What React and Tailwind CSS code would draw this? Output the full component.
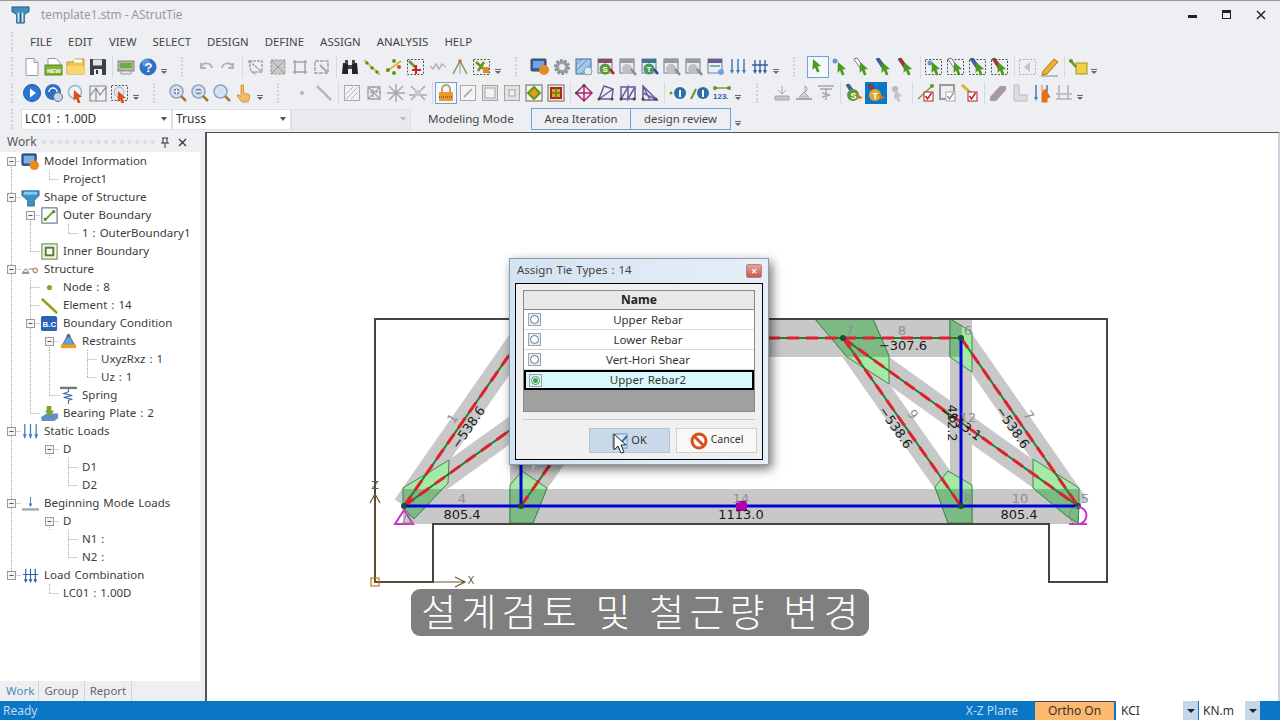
import React from 'react';

const Sv = ({ children, s = 20 }) => (
  <svg width={s} height={s} viewBox="0 0 20 20" className="block">{children}</svg>
);

// small bits shared by the toolbar icons
const Cur = ({ x = 8, y = 5, c = '#4c9a1c' }) => <path d={`M${x} ${y}l8 7-3.5.5 2 5-2.5 1-2-5-2.5 2.500z`} fill={c} />;
const Dash = ({ c = '#555' }) => <rect x="1.500" y="2.500" width="16" height="15" fill="none" stroke={c} strokeDasharray="2 1.500" />;
const Band = ({ c = '#7fb0e0', e = '#445' }) => <path d="M2 2l3-1 6 8-3 2z" fill={c} stroke={e} strokeWidth=".7" />;
const Win = ({ c = '#8a4a6a' }) => (
  <g>
    <rect x="2" y="2" width="14" height="14" fill="#e8eef6" stroke="#6a7a9a" />
    <rect x="2" y="2" width="14" height="4" fill={c} />
  </g>
);
const Glass = ({ c = '#7a8fb0' }) => (
  <g>
    <circle cx="8.500" cy="8.500" r="6.500" fill="#d7e2f2" stroke="#8fa3c4" strokeWidth="1.500" />
    <circle cx="8.500" cy="8.500" r="3" fill={c} />
    <path d="M13 13l5 5" stroke="#a87a3a" strokeWidth="2.500" />
  </g>
);
const GrayBox = ({ inner = 5 }) => (
  <g fill="none" stroke="#a5a5a5">
    <rect x="2.500" y="2.500" width="15" height="15" fill="#e2e2e2" />
    <rect x={inner} y={inner} width={20 - 2 * inner} height={20 - 2 * inner} fill="#f2f2f2" />
  </g>
);
const GrayNet = () => (
  <g stroke="#a3a3a3" fill="none" strokeWidth="1.300">
    <path d="M4 4h12v12H4zM4 4l12 12M16 4L4 16" />
    <path d="M3 9h14M9 3v14" strokeDasharray="2 1" />
  </g>
);
const Truss = ({ c = '#6a5a9a', d = 'M3 16L8 3 17 6 16 16zM3 16L17 6' }) => (
  <g>
    <path d={d} fill="none" stroke={c} strokeWidth="1.500" />
    <circle cx="3" cy="16" r="1.500" fill="#445" />
    <circle cx="16" cy="16" r="1.500" fill="#445" />
  </g>
);
const GraySupport = () => (
  <g fill="#c4c4c4" stroke="#a8a8a8">
    <path d="M10 3v7M6 7l4 4 4-4" fill="none" />
    <path d="M3 13h14v4H3z" />
  </g>
);

const I = {
  newdoc: <Sv><path d="M4 1.500h8l4 4v13H4z" fill="#fff" stroke="#9a9a9a" /><path d="M12 1.500v4h4" fill="#eee" stroke="#9a9a9a" /></Sv>,
  newg: <Sv><path d="M4 1.500h8l4 4v3H4z" fill="#fff" stroke="#9a9a9a" /><rect x="1" y="8" width="17" height="10" fill="#7bb52e" stroke="#5c8a20" /><text x="3" y="15.500" fontSize="6" fontWeight="700" fill="#fff" fontFamily="Liberation Sans, sans-serif">NEW</text></Sv>,
  open: <Sv><path d="M1 5h6l2-3h9v15H1z" fill="#f2c24c" stroke="#c8962a" /><path d="M1 9h17v8H1z" fill="#f8d66e" /><rect x="8" y="2.500" width="8" height="3" fill="#fff" /></Sv>,
  save: <Sv><path d="M2 2h15l1 1v15H2z" fill="#3c4048" /><rect x="5" y="2.500" width="9" height="6" fill="#dfe3e8" /><rect x="6" y="12" width="8" height="6" fill="#eee" /><rect x="8" y="13" width="2" height="4" fill="#333" /></Sv>,
  print: <Sv><rect x="2" y="4" width="16" height="10" fill="#b0b8a8" stroke="#7f8a78" /><rect x="4" y="6" width="12" height="5" fill="#6fae3c" /><rect x="5" y="14" width="10" height="3" fill="#e8e8e8" stroke="#999" /></Sv>,
  help: <Sv><circle cx="10" cy="10" r="8.500" fill="#2f6fc4" /><circle cx="8" cy="6" r="4" fill="#7fb0ea" opacity=".6" /><text x="6.500" y="15" fontSize="13" fontWeight="700" fill="#fff" fontFamily="Liberation Sans, sans-serif">?</text></Sv>,
  undo: <Sv><path d="M5 10c2-5 10-5 11 1M5 6v5h5" fill="none" stroke="#b3b3b3" strokeWidth="2" /></Sv>,
  redo: <Sv><path d="M15 10c-2-5-10-5-11 1M15 6v5h-5" fill="none" stroke="#b3b3b3" strokeWidth="2" /></Sv>,
  g1: <Sv><path d="M3 4h13v11H5zM3 4l13 11M7 15l3 3" fill="none" stroke="#a4a4a4" strokeWidth="1.500" strokeDasharray="3 1" /></Sv>,
  g2: <Sv><rect x="3" y="3" width="14" height="14" fill="#c8c8c8" stroke="#9a9a9a" strokeDasharray="3 1" /><path d="M3 3l14 14M17 3L3 17" stroke="#999" /></Sv>,
  g3: <Sv><path d="M3 5h14M5 3v14M15 3v14M3 15h14" fill="none" stroke="#a4a4a4" strokeWidth="1.500" /></Sv>,
  g4: <Sv><path d="M3 4h13v12H3z" fill="none" stroke="#a4a4a4" strokeWidth="1.500" strokeDasharray="4 1" /><path d="M8 8l7 7" stroke="#a4a4a4" strokeWidth="2" /></Sv>,
  binoc: <Sv><path d="M3 6h5v11H2zM12 6h5l1 11h-6z" fill="#222" /><rect x="8" y="8" width="4" height="4" fill="#444" /><rect x="5" y="3" width="3" height="4" fill="#444" /><rect x="12" y="3" width="3" height="4" fill="#444" /></Sv>,
  tie: <Sv><path d="M2 3l16 15" stroke="#d8c050" strokeWidth="2" /><path d="M4 5l2 2M9 10l2 2M14 14l2 2" stroke="#5c8a20" strokeWidth="3" /></Sv>,
  cross: <Sv><path d="M2 15L17 4" stroke="#d8b840" strokeWidth="2" /><circle cx="10" cy="4" r="2" fill="#5c9a20" /><circle cx="4" cy="13" r="2" fill="#5c9a20" /><circle cx="15" cy="10" r="2" fill="#c05020" /><circle cx="10" cy="16" r="2" fill="#5c9a20" /></Sv>,
  dashred: <Sv><Dash /><path d="M3 4l7 7" stroke="#5c9a20" strokeWidth="2.500" /><path d="M10 8v9M6 13h9" stroke="#d02020" strokeWidth="2" /></Sv>,
  graytie: <Sv><path d="M2 9l3 3 3-5 3 5 3-5 4 3" fill="none" stroke="#b4b4b4" strokeWidth="1.500" /></Sv>,
  tri: <Sv><path d="M3 17L10 4l7 13" fill="none" stroke="#7a9a50" strokeWidth="1.500" /><path d="M10 4v13" stroke="#999" /><circle cx="10" cy="4" r="1.700" fill="#c07020" /></Sv>,
  dashgreen: <Sv><Dash /><path d="M4 5l8 7M12 5l-6 9" stroke="#5c9a20" strokeWidth="2.500" /><rect x="11" y="10" width="6" height="6" fill="#d89020" /></Sv>,
  monitor: <Sv><rect x="1" y="2" width="15" height="12" rx="1" fill="#2f62a8" stroke="#444" /><rect x="3" y="4" width="11" height="7" fill="#6fa4de" /><circle cx="14" cy="13" r="5" fill="#e88a20" /></Sv>,
  gear: <Sv><circle cx="10" cy="10" r="6.500" fill="#9aa2ac" stroke="#8a929c" strokeWidth="3" strokeDasharray="2.500 1.500" /><circle cx="10" cy="10" r="3" fill="#eee" /></Sv>,
  hatch: <Sv><rect x="2" y="2" width="15" height="15" fill="#a8c8e8" stroke="#3a70a8" /><path d="M2 8l6-6M2 14L14 2M7 17L17 7" stroke="#5a90c8" /><circle cx="14" cy="14" r="4" fill="#dfeaf6" stroke="#7aa" /></Sv>,
  winS: <Sv><Win /><circle cx="9" cy="12" r="5.500" fill="#5c9a30" /><text x="6.500" y="15" fontSize="8" fontWeight="700" fill="#fff" fontFamily="Liberation Sans, sans-serif">S</text><path d="M14 12l4 5" stroke="#b02020" strokeWidth="2.500" /></Sv>,
  grayS: <Sv><Win c="#9a9a9a" /><circle cx="9" cy="12" r="5" fill="#c0c0c0" /><path d="M13 12l5 6" stroke="#8a8a8a" strokeWidth="2.500" /></Sv>,
  winT: <Sv><Win c="#3a7a8a" /><circle cx="9" cy="12" r="5.500" fill="#4a9a60" /><text x="6.500" y="15" fontSize="8" fontWeight="700" fill="#fff" fontFamily="Liberation Sans, sans-serif">T</text><path d="M14 12l4 5" stroke="#2050a0" strokeWidth="2.500" /></Sv>,
  winB: <Sv><Win c="#6a5a9a" /><rect x="4" y="8" width="10" height="2" fill="#8aa" /><circle cx="15" cy="15" r="3" fill="#6fa4de" /></Sv>,
  loads: <Sv><path d="M4 2v13M10 2v13M16 2v13" stroke="#3f7fc0" strokeWidth="1.500" /><path d="M2 13l2 4 2-4M8 13l2 4 2-4M14 13l2 4 2-4" fill="#3f7fc0" /></Sv>,
  combo: <Sv><path d="M2 8h16M5 3v12M10 3v12M15 3v12" stroke="#2f5fa8" strokeWidth="1.300" /><path d="M3 13l2 4 2-4M8 13l2 4 2-4M13 13l2 4 2-4" fill="#2f5fa8" /></Sv>,
  arrow: <Sv><Cur x={5} y={2} /></Sv>,
  a1: <Sv><circle cx="5" cy="4" r="2.500" fill="#6f95c8" /><Cur /></Sv>,
  a2: <Sv><Band c="#fff" /><Cur /></Sv>,
  a3: <Sv><Band c="#3860b8" /><Cur /></Sv>,
  a4: <Sv><Band c="#c02828" /><Cur /></Sv>,
  d1: <Sv><Dash /><circle cx="6" cy="6" r="2.500" fill="#6f95c8" /><Cur /></Sv>,
  d2: <Sv><Dash /><Band c="#fff" /><Cur /></Sv>,
  d3: <Sv><Dash /><Band c="#3860b8" /><Cur /></Sv>,
  d4: <Sv><Dash /><Band c="#c02828" /><Cur /></Sv>,
  dgray: <Sv><Dash c="#b0b0b0" /><path d="M12 5v10l-6-5z" fill="#c4c4c4" /></Sv>,
  pencil: <Sv><path d="M3 14L14 2l4 3L7 17l-5 1z" fill="#eeb030" stroke="#a87818" /><path d="M1 19h17" stroke="#888" /></Sv>,
  yellow: <Sv><rect x="8" y="6" width="11" height="11" fill="#f0d048" stroke="#a89020" /><path d="M2 3l6 7" stroke="#5c9a20" strokeWidth="2.500" /><circle cx="3" cy="4" r="2" fill="#5c9a20" /></Sv>,
  play: <Sv><circle cx="10" cy="10" r="8.500" fill="#2a78d0" stroke="#1a5aa8" /><path d="M8 5.500l6 4.500-6 4.500z" fill="#fff" /></Sv>,
  bluegear: <Sv><circle cx="9" cy="9" r="8" fill="#2f6fc4" /><path d="M5 9a4 4 0 018 0" stroke="#fff" fill="none" strokeWidth="1.500" /><circle cx="14" cy="14" r="4.500" fill="#c8d4e4" stroke="#678" /></Sv>,
  zcur: <Sv><circle cx="9" cy="9" r="6.500" fill="#f0f4fa" stroke="#9fb2cc" strokeWidth="1.500" /><Cur x={8} y={7} c="#d8501a" /></Sv>,
  poly: <Sv><path d="M2 3h16v15H2zM2 13l6-8 4 7 6-8M8 5v13" fill="none" stroke="#8a8a8a" strokeWidth="1.200" /></Sv>,
  dcur: <Sv><Dash /><circle cx="9" cy="9" r="5" fill="#dfe8f2" stroke="#9fb2cc" /><Cur x={8} y={8} c="#d8501a" /></Sv>,
  zplus: <Sv><Glass /><path d="M6 8.500h5M8.500 6v5" stroke="#fff" /></Sv>,
  zminus: <Sv><Glass /><path d="M6 8.500h5" stroke="#fff" strokeWidth="1.500" /></Sv>,
  zfit: <Sv><Glass c="#cfe0f2" /></Sv>,
  hand: <Sv><path d="M7 2h2.500v8l6 1.500V16l-2 3H8l-5-6 1-1.500 3 2z" fill="#f4bc6a" stroke="#d89838" /></Sv>,
  gdot: <Sv><circle cx="10" cy="10" r="2" fill="#b8b8b8" /></Sv>,
  gline: <Sv><path d="M3 3l14 14" stroke="#b8b8b8" strokeWidth="2.500" /></Sv>,
  ghatch: <Sv><rect x="2.500" y="2.500" width="15" height="15" fill="#f2f2f2" stroke="#a8a8a8" /><path d="M4 16L16 4M4 11l7-7M9 16l7-7" stroke="#b4b4b4" /></Sv>,
  ggrid: <Sv><GrayNet /></Sv>,
  gcross: <Sv><path d="M3 3l14 14M17 3L3 17M10 1v18M1 10h18" stroke="#a8a8a8" strokeWidth="1.500" /></Sv>,
  gcross2: <Sv><path d="M3 17L17 3M3 3l14 14M1 12h18" stroke="#a8a8a8" strokeWidth="1.500" /><rect x="7" y="7" width="6" height="6" fill="#c8c8c8" /></Sv>,
  lock: <Sv><path d="M6 9V6a4 4 0 018 0v3" fill="none" stroke="#c8a060" strokeWidth="2" /><rect x="3" y="9" width="14" height="9" rx="1" fill="#ee9a28" /><path d="M3 14h14" stroke="#8a6a30" strokeDasharray="1 1" strokeWidth="2" /></Sv>,
  glink: <Sv><rect x="2.500" y="2.500" width="15" height="15" fill="#f4f4f4" stroke="#aaa" /><path d="M6 14l8-8" stroke="#b0b0b0" strokeWidth="2" /></Sv>,
  gbox: <Sv><GrayBox inner={5} /></Sv>,
  gbox2: <Sv><GrayBox inner={7} /></Sv>,
  orange: <Sv><rect x="2" y="2" width="16" height="16" fill="#f8f4e4" stroke="#666" /><path d="M10 4l6 6-6 6-6-6z" fill="#e89a20" stroke="#5c9a20" strokeWidth="2" /></Sv>,
  redgreen: <Sv><rect x="2" y="2" width="16" height="16" fill="#f4f0e0" stroke="#666" /><path d="M5 5h10v10H5z" fill="#e8a028" stroke="#b02020" strokeWidth="2" /><path d="M10 5v10M5 10h10" stroke="#4a8a20" strokeWidth="1.500" /></Sv>,
  magenta: <Sv><path d="M10 2l8 8-8 8-8-8zM2 10h16M10 2v16" fill="none" stroke="#b02070" strokeWidth="1.500" /><circle cx="10" cy="2.500" r="1.500" fill="#445" /><circle cx="2.500" cy="10" r="1.500" fill="#445" /></Sv>,
  tr1: <Sv><Truss /></Sv>,
  tr2: <Sv><Truss d="M3 16L3 4H17V16zM3 16L10 4 10 16 17 4" /></Sv>,
  tr3: <Sv><Truss d="M3 3L3 17 17 17zM3 3L10 17M3 10L17 17" /></Sv>,
  i1: <Sv><circle cx="12" cy="10" r="6" fill="#2f6fa8" /><rect x="11" y="7" width="2" height="7" fill="#fff" /><circle cx="3" cy="10" r="1.500" fill="#5c9a20" /></Sv>,
  i2: <Sv><circle cx="13" cy="10" r="6" fill="#2f6fa8" /><rect x="12" y="7" width="2" height="7" fill="#fff" /><path d="M1 16L6 6" stroke="#5c9a20" strokeWidth="2" /></Sv>,
  num: <Sv><path d="M3 5h14" stroke="#7a9a50" strokeWidth="1.500" /><circle cx="3" cy="5" r="2" fill="#5c9a20" /><circle cx="17" cy="5" r="2" fill="#5c9a20" /><text x="1" y="16" fontSize="8" fontWeight="700" fill="#2f5fa8" fontFamily="Liberation Sans, sans-serif">123.</text></Sv>,
  gs1: <Sv><GraySupport /></Sv>,
  gs2: <Sv><path d="M10 3a3 3 0 010 6l5 5H5l5-5" fill="#d0d0d0" stroke="#a8a8a8" /><path d="M2 16h16" stroke="#a8a8a8" strokeWidth="2" /></Sv>,
  gs3: <Sv><path d="M2 3h16M4 6h12M10 6v11M6 10l8 2-8 2" fill="none" stroke="#a8a8a8" strokeWidth="1.500" /></Sv>,
  tS: <Sv><Band c="#3860b8" /><circle cx="9" cy="12" r="6" fill="#5c9a30" /><text x="6.500" y="15.500" fontSize="9" fontWeight="700" fill="#fff" fontFamily="Liberation Sans, sans-serif">S</text><path d="M12 10l7 5-4 1 1 3z" fill="#e8701a" /></Sv>,
  tT: <Sv><Band c="#c02828" /><circle cx="9" cy="12" r="6" fill="#e0a830" /><text x="6.500" y="15.500" fontSize="9" fontWeight="700" fill="#fff" fontFamily="Liberation Sans, sans-serif">T</text><path d="M12 10l7 5-4 1 1 3z" fill="#e8701a" /></Sv>,
  gcur: <Sv><circle cx="7" cy="6" r="3" fill="#b8b8b8" /><path d="M7 6l7 7-3 1 1 4-2 1-2-4-2 2z" fill="#c4c4c4" /></Sv>,
  chk1: <Sv><path d="M2 16L15 4" stroke="#7a9a50" strokeWidth="1.500" /><circle cx="16" cy="3" r="2" fill="#5c9a20" /><rect x="8" y="9" width="9" height="9" fill="#fff" stroke="#b02020" /><path d="M9.500 13l2 3 4-6" fill="none" stroke="#c02020" strokeWidth="1.500" /></Sv>,
  chk2: <Sv><rect x="2" y="2" width="14" height="14" fill="#eee" stroke="#999" strokeWidth="2" /><rect x="8" y="9" width="9" height="9" fill="#fff" stroke="#aaa" /><path d="M9.500 13l2 3 4-6" fill="none" stroke="#999" strokeWidth="1.500" /></Sv>,
  chk3: <Sv><path d="M2 2l10 9" stroke="#c8b838" strokeWidth="3" /><rect x="8" y="9" width="9" height="9" fill="#fff" stroke="#b02020" /><path d="M9.500 13l2 3 4-6" fill="none" stroke="#c02020" strokeWidth="1.500" /></Sv>,
  gbar: <Sv><path d="M2 14L12 3h6v4L8 18H2z" fill="#a89aa4" /><path d="M5 14l8-8" stroke="#c88" /></Sv>,
  gL: <Sv><path d="M4 2h5v10h8v6H4z" fill="#dcdcdc" stroke="#bbb" /></Sv>,
  drop: <Sv><path d="M4 2v14M15 2v7" stroke="#3f7fc0" strokeWidth="1.500" /><path d="M2 14l2 4 2-4" fill="#3f7fc0" /><path d="M10 2v7M13 6l5 8-3 1v4h-5v-9z" fill="#e8701a" stroke="#e8701a" /></Sv>,
  glds: <Sv><path d="M5 2v8M14 2v8M2 11h16M2 16h16M5 11v5M14 11v5" stroke="#b4b4b4" strokeWidth="1.500" /></Sv>,
};

const row1 = ['newdoc', 'newg', 'open', 'save', 's', 'print', 'help', 'd', 'g', 'undo', 'redo', 's', 'g1', 'g2', 'g3', 'g4', 's', 'binoc', 'tie', 'cross', 'dashred', 'graytie', 'tri', 'dashgreen', 'd', 'g', 'monitor', 'gear', 'hatch', 'winS', 'grayS', 'winT', 'grayS', 'grayS', 'winB', 'loads', 'combo', 'd', 'g', '#arrow', 'a1', 'a2', 'a3', 'a4', 's', 'd1', 'd2', 'd3', 'd4', 's', 'dgray', 'pencil', 's', 'yellow', 'd'];
const row2 = ['play', 'bluegear', 'zcur', 'poly', 'dcur', 'd', 'g', 'zplus', 'zminus', 'zfit', 'hand', 'd', 'g', 'gdot', 'gline', 's', 'ghatch', 'ggrid', 'gcross', 'gcross2', 's', '#lock', 'glink', 'gbox', 'gbox2', 'orange', 'redgreen', 's', 'magenta', 'tr1', 'tr2', 'tr3', 's', 'i1', 'i2', 'num', 'd', 'G', 'gs1', 'gs2', 'gs3', 's', 'tS', '@tT', 'gcur', 's', 'chk1', 'chk2', 'chk3', 's', 'gbar', 'gL', 'drop', 'glds', 'd'];

function Grip({ className }) {
  return <div className={`h-[20px] border-l-2 border-dotted border-[#cfd0d3] ${className}`} />;
}

function Tool({ t }) {
  if (t === 's') return <div className="w-[6px] h-[22px] flex justify-center"><div className="w-px h-full bg-[#d8d9dc]" /></div>;
  if (t === 'g') return <div className="w-[26px] flex justify-center"><Grip /></div>;
  if (t === 'G') return <div className="w-[28px] flex justify-center"><Grip /></div>;
  if (t === 'd') {
    return (
      <div className="w-[10px] flex flex-col items-center gap-[1px] pt-[8px]">
        <div className="w-[6px] h-px bg-[#666]" />
        <div className="w-0 h-0 border-x-[3px] border-x-transparent border-t-[3px] border-t-[#666]" />
      </div>
    );
  }
  if (t[0] === '#') {
    return <div className="w-[22px] h-[22px] flex items-center justify-center border border-[#6aa4d0] bg-[#f4f7fb]">{I[t.slice(1)]}</div>;
  }
  if (t[0] === '@') {
    return <div className="w-[22px] h-[22px] flex items-center justify-center bg-[#0a78c8]">{I[t.slice(1)]}</div>;
  }
  return <div className="w-[22px] h-[22px] flex items-center justify-center">{I[t]}</div>;
}

function Combo({ label, className, disabled }) {
  return (
    <div className={`h-[21px] flex items-center justify-between border border-[#e0e1e4] pl-[3px] pr-[4px] ${disabled ? 'bg-[#e9eaed]' : 'bg-white'} ${className}`}>
      <span className="text-[12px] text-[#333] [word-spacing:1px]">{label}</span>
      <div className={`w-0 h-0 border-x-[3px] border-x-transparent border-t-[4px] ${disabled ? 'border-t-[#bbb]' : 'border-t-[#555]'}`} />
    </div>
  );
}

// tree connector cells: F expander + line down, X expander through, Z expander + line up,
// | vertical, T tee, L corner, . empty
function Cell({ k }) {
  const dots = { stroke: '#a9a9a9', strokeDasharray: '1 1' };
  const box = k === 'F' || k === 'X' || k === 'Z';
  return (
    <svg width="19" height="18" className="block shrink-0">
      {(k === '|' || k === 'T' || k === 'X') && <line x1="9.500" y1="0" x2="9.500" y2="18" {...dots} />}
      {k === 'F' && <line x1="9.500" y1="9" x2="9.500" y2="18" {...dots} />}
      {(k === 'L' || k === 'Z') && <line x1="9.500" y1="0" x2="9.500" y2="9" {...dots} />}
      {(k === 'T' || k === 'L') && <line x1="9.500" y1="9.500" x2="19" y2="9.500" {...dots} />}
      {box && <line x1="9.500" y1="9.500" x2="19" y2="9.500" {...dots} />}
      {box && <rect x="5.500" y="5.500" width="8" height="8" fill="#f4f4f4" stroke="#9a9a9a" />}
      {box && <line x1="7.500" y1="9.500" x2="11.500" y2="9.500" stroke="#555" />}
    </svg>
  );
}

const T = {
  model: <Sv s={19}><rect x="1" y="2" width="15" height="12" rx="1" fill="#2f62a8" stroke="#334" /><rect x="3" y="4" width="11" height="8" fill="#7fb0e4" /><circle cx="14" cy="14" r="5" fill="#e88a20" /></Sv>,
  shape: <Sv s={19}><path d="M1 3h18v5l-5 5v6H7v-6L1 8z" fill="#3f8fc8" stroke="#2a6a9a" /><path d="M3 4h14v3H3z" fill="#8fc8ec" /></Sv>,
  outer: <Sv s={19}><rect x="2" y="2" width="16" height="16" fill="#fff" stroke="#3f5f6a" /><path d="M6 14l8-8" stroke="#6a9a2a" strokeWidth="2" /><rect x="4" y="12.500" width="3" height="3" fill="#5c8a20" /><rect x="13" y="4.500" width="3" height="3" fill="#5c8a20" /></Sv>,
  inner: <Sv s={19}><rect x="2" y="2" width="16" height="16" fill="#eef4e0" stroke="#5c7a30" /><rect x="6" y="6" width="8" height="8" fill="#fff" stroke="#5c7a30" strokeWidth="2" /></Sv>,
  struct: <Sv s={19}><path d="M2 13l3-4 3 4zM8 9.500h7" fill="none" stroke="#8a7a6a" /><circle cx="15" cy="11" r="2.500" fill="#f0e8e0" stroke="#a86a4a" /><path d="M1 14h8" stroke="#8a7a6a" /></Sv>,
  node: <Sv s={19}><circle cx="10" cy="10" r="2.700" fill="#8aa030" /></Sv>,
  element: <Sv s={19}><path d="M2 3l16 15" stroke="#b4b838" strokeWidth="3" /><path d="M2 3l16 15" stroke="#5c7a20" strokeWidth="1" /></Sv>,
  bc: <Sv s={19}><rect x="1" y="2" width="17" height="16" rx="2" fill="#2a62b8" /><text x="2.500" y="14" fontSize="8.500" fontWeight="700" fill="#fff" fontFamily="Liberation Sans, sans-serif">B.C</text></Sv>,
  restraints: <Sv s={19}><path d="M10 2l6 11H4z" fill="#6f9fd0" stroke="#3f6fa0" /><circle cx="10" cy="4" r="2" fill="#3f6fa0" /><rect x="2" y="13" width="16" height="4" fill="#e8a028" /></Sv>,
  spring: <Sv s={19}><path d="M1 2h18" stroke="#777" strokeWidth="2.500" /><path d="M10 3v3l-5 2 9 2-9 2 9 2-4 1v4" fill="none" stroke="#3f6fa8" strokeWidth="1.200" /></Sv>,
  plate: <Sv s={19}><path d="M1 14l6-4h12v5l-4 3H2z" fill="#5f8fc4" /><path d="M7 2h5v5h3l-5 6-5-6h2z" fill="#7aa82a" /></Sv>,
  loads: <Sv s={19}><path d="M4 2v12M10 2v12M16 2v12" stroke="#3f7fc0" strokeWidth="1.300" /><path d="M2 13l2 5 2-5M8 13l2 5 2-5M14 13l2 5 2-5" fill="#3f7fc0" /></Sv>,
  begin: <Sv s={19}><path d="M10 3v9" stroke="#3f7fc0" /><path d="M8 10l2 4 2-4" fill="#3f7fc0" /><rect x="1" y="15" width="18" height="2.500" fill="#a8a8a8" /></Sv>,
  combo: <Sv s={19}><path d="M2 9h16M5 3v12M10 3v12M15 3v12" stroke="#2f5fa8" strokeWidth="1.200" /><path d="M3 14l2 4 2-4M8 14l2 4 2-4M13 14l2 4 2-4" fill="#2f5fa8" /></Sv>,
};

const treeRows = [
  ['F', 'model', 'Model Information'],
  ['|.L', '', 'Project1'],
  ['X', 'shape', 'Shape of Structure'],
  ['|F', 'outer', 'Outer Boundary'],
  ['||.L', '', '1 : OuterBoundary1'],
  ['|L', 'inner', 'Inner Boundary'],
  ['X', 'struct', 'Structure'],
  ['|T', 'node', 'Node : 8'],
  ['|T', 'element', 'Element : 14'],
  ['|X', 'bc', 'Boundary Condition'],
  ['||F', 'restraints', 'Restraints'],
  ['|||.T', '', 'UxyzRxz : 1'],
  ['|||.L', '', 'Uz : 1'],
  ['||L', 'spring', 'Spring'],
  ['|L', 'plate', 'Bearing Plate : 2'],
  ['X', 'loads', 'Static Loads'],
  ['|.F', '', 'D'],
  ['|..T', '', 'D1'],
  ['|..L', '', 'D2'],
  ['X', 'begin', 'Beginning Mode Loads'],
  ['|.F', '', 'D'],
  ['|..T', '', 'N1 :'],
  ['|..L', '', 'N2 :'],
  ['Z', 'combo', 'Load Combination'],
  ['..L', '', 'LC01 : 1.00D'],
];

function TreeRow({ cells, icon, label }) {
  return (
    <div className="h-[18px] flex items-center">
      {cells.split('').map((k, i) => <Cell key={i} k={k} />)}
      {icon && <div className="w-[19px] shrink-0">{T[icon]}</div>}
      <span className="ml-1 -mt-px text-[11.5px] [word-spacing:1px] leading-[18px] text-[#3c3c3c] whitespace-nowrap">{label}</span>
    </div>
  );
}

const nodes = [
  '815,319 873,319 889,356 889,384 847,357',
  '950,319 972,332 972,372 950,357',
  '948,471 972,485 972,523 948,523 935,487',
  '1033,459 1079,488 1079,507 1078,523 1068,517 1033,488',
  '403,488 449,460 448,483 414,519 403,507',
  '510,485 522,471 547,488 533,523 510,523',
];

function Drawing() {
  const redGreen = [
    [404, 506, 521, 338], [404, 506, 639, 338], [521, 506, 639, 338],
    [521, 338, 961, 338], [843, 338, 961, 506], [843, 338, 1078, 506], [961, 338, 1078, 506],
  ];
  const lab = { fontFamily: '"DejaVu Sans", sans-serif', fontSize: 13, textAnchor: 'middle', fill: '#1a1a1a' };
  const gray = { fontFamily: '"DejaVu Sans", sans-serif', fontSize: 13, textAnchor: 'middle', fill: '#8f8f8f' };
  return (
    <svg width="1071" height="568" viewBox="207 133 1071 568" className="block">
      <defs>
        <clipPath id="chords">
          <rect x="403" y="489" width="676" height="35" />
          <rect x="510" y="319" width="452" height="38" />
        </clipPath>
      </defs>
      <g fill="#c8c8c8">
        <rect x="403" y="489" width="676" height="35" />
        <rect x="510" y="319" width="452" height="38" />
        <rect x="950" y="319" width="22" height="205" />
        <rect x="510" y="319" width="22" height="205" />
      </g>
      <g stroke="#c8c8c8" strokeWidth="23">
        <line x1="404" y1="506" x2="521" y2="338" />
        <line x1="404" y1="506" x2="639" y2="338" />
        <line x1="521" y1="506" x2="639" y2="338" />
        <line x1="843" y1="338" x2="961" y2="506" />
        <line x1="843" y1="338" x2="1078" y2="506" />
        <line x1="961" y1="338" x2="1078" y2="506" />
      </g>
      {nodes.map((p) => <polygon key={p} points={p} fill="#a6e8a6" stroke="#3f8a4f" />)}
      <g clipPath="url(#chords)">
        {nodes.map((p) => <polygon key={p} points={p} fill="#7cb983" stroke="#3f8a4f" />)}
      </g>
      <polygon points="375,319 1107,319 1107,582 1049,582 1049,524 433,524 433,582 375,582" fill="none" stroke="#444" strokeWidth="2" />
      {redGreen.map((l, i) => (
        <g key={i}>
          <line x1={l[0]} y1={l[1]} x2={l[2]} y2={l[3]} stroke="#1f7f30" strokeWidth="2" />
          <line x1={l[0]} y1={l[1]} x2={l[2]} y2={l[3]} stroke="#e0202a" strokeWidth="3" strokeDasharray="12 7" />
        </g>
      ))}
      <g stroke="#0000dc" strokeWidth="3">
        <line x1="404" y1="506" x2="1078" y2="506" />
        <line x1="521" y1="506" x2="521" y2="338" />
        <line x1="961" y1="506" x2="961" y2="338" />
      </g>
      <g fill="#14503a">
        <circle cx="404" cy="506" r="3" />
        <circle cx="521" cy="506" r="3" />
        <circle cx="961" cy="506" r="3" />
        <circle cx="1078" cy="506" r="3" />
        <circle cx="961" cy="338" r="3" />
        <circle cx="843" cy="338" r="3" />
      </g>
      <rect x="736" y="501" width="11" height="10" fill="#b000b0" />
      <path d="M404 510l-9 14h18z" fill="none" stroke="#d030d0" strokeWidth="2" />
      <path d="M407 512l-4 11h10z" fill="none" stroke="#888" />
      <path d="M1078 507a8.500 8.500 0 010 17M1069 524h18" fill="none" stroke="#d030d0" strokeWidth="2" />
      <path d="M1078 507a8.500 8.500 0 000 17" fill="none" stroke="#888" />

      <g fill="none" stroke="#6a5030" strokeWidth="1.200">
        <path d="M375 582V495M370 503l5-9 5 9" />
        <path d="M375 582H464M455 577l10 5-10 5" />
        <rect x="371" y="578" width="8" height="8" stroke="#b87a20" />
      </g>
      <text x="471" y="584" fontFamily='"DejaVu Sans", sans-serif' fontSize="10" textAnchor="middle" fill="#6a5a3a">X</text>
      <text x="375" y="489" fontFamily='"DejaVu Sans", sans-serif' fontSize="11" textAnchor="middle" fill="#6a5a3a">Z</text>

      <text x="462" y="503" {...gray}>4</text>
      <text x="741" y="503" {...gray}>14</text>
      <text x="1020" y="503" {...gray}>10</text>
      <text x="968" y="503" {...gray}>8</text>
      <text x="1085" y="503" {...gray}>5</text>
      <text x="968" y="335" {...gray}>6</text>
      <text x="850" y="335" {...gray}>7</text>
      <text x="902" y="335" {...gray}>8</text>
      <text x="968" y="422" {...gray}>12</text>
      <text transform="translate(909 417) rotate(55)" {...gray}>9</text>
      <text transform="translate(1025 418) rotate(55)" {...gray}>7</text>
      <text transform="translate(456 421) rotate(-55)" {...gray}>1</text>

      <text x="462" y="519" {...lab}>805.4</text>
      <text x="741" y="519" {...lab}>1113.0</text>
      <text x="1019" y="519" {...lab}>805.4</text>
      <text x="903" y="350" {...lab}>−307.6</text>
      <text transform="translate(472 430) rotate(-55)" {...lab}>−538.6</text>
      <text transform="translate(892 430) rotate(55)" {...lab}>−538.6</text>
      <text transform="translate(1009 430) rotate(55)" {...lab}>−538.6</text>
      <text transform="translate(958 427) rotate(36)" {...lab}>−613.1</text>
      <text transform="translate(948 423) rotate(90)" {...lab}>412.2</text>
    </svg>
  );
}

function Radio({ on }) {
  return (
    <div className={`w-[13px] h-[13px] flex items-center justify-center border border-[#9aa5b0] bg-[#e8edf2] ${on ? 'ml-[3px]' : 'ml-[4px]'}`}>
      <div className={`w-[9px] h-[9px] rounded-full border flex items-center justify-center bg-white ${on ? 'border-[#3a9a5a]' : 'border-[#5a7a8a]'}`}>
        {on && <div className="w-[5px] h-[5px] rounded-full bg-[#3aa85a]" />}
      </div>
    </div>
  );
}

function TieDialog() {
  const rows = ['Upper Rebar', 'Lower Rebar', 'Vert-Hori Shear'];
  return (
    <div className="absolute left-[509px] top-[257px] w-[260px] h-[207px] flex flex-col px-[5px] pb-[4px] bg-gradient-to-r from-[#d4e3f1] to-[#e6eff8] border border-[#8d9aa8] shadow-[3px_4px_10px_rgba(0,0,0,0.55)]">
      <div className="h-[24px] shrink-0 flex items-center justify-between pr-[1px]">
        <span className="ml-[2px] -mt-[2px] text-[11.5px] [word-spacing:1px] text-[#444]">Assign Tie Types : 14</span>
        <div className="w-[16px] h-[14px] flex items-center justify-center rounded-[2px] border border-[#a88] bg-gradient-to-b from-[#e6a49c] to-[#c9584c] text-[10px] leading-none font-bold text-white">×</div>
      </div>
      <div className="flex-1 flex flex-col border border-black bg-[#f0f0f0] px-[7px] pt-[6px]">
        <div className="border border-[#8a8a8a] h-[122px] flex flex-col bg-[#a0a0a0]">
          <div className="h-[19px] shrink-0 flex items-center justify-center bg-[#e8e8e8] border-b border-[#888] text-[12px] font-bold text-[#222]">Name</div>
          {rows.map((r) => (
            <div key={r} className="h-[20px] shrink-0 flex items-center bg-white border-b border-[#d8d8d8]">
              <Radio />
              <span className="flex-1 text-center text-[11.5px] [word-spacing:1px] text-[#333] pl-[1px]">{r}</span>
            </div>
          ))}
          <div className="h-[20px] shrink-0 flex items-center bg-[#d8f9fb] border-2 border-black">
            <Radio on />
            <span className="flex-1 text-center text-[11.5px] [word-spacing:1px] text-[#333] pl-[2px] -mt-px">Upper Rebar2</span>
          </div>
        </div>
        <div className="mt-[7px] border-t border-[#c8c8c8]" />
        <div className="mt-[8px] flex justify-end gap-[6px] mr-[-2px]">
          <div className="relative w-[81px] h-[25px] flex items-center justify-center gap-[3px] bg-[#cad9ea] border border-[#b2c3d8]">
            <svg width="16" height="16" viewBox="0 0 16 16" className="block"><rect x="1" y="1" width="14" height="14" fill="#dfe8f2" stroke="#6f8fb0" /><path d="M5 8l3 3 7-8" stroke="#2f6fc4" strokeWidth="2" fill="none" /></svg>
            <span className="-mt-px text-[11px] text-[#333]">OK</span>
            <svg width="15" height="21" viewBox="0 0 15 21" className="absolute left-[23px] top-[4px]"><path d="M1 1v16l4-4 3 7 3-1-3-7h5z" fill="#fff" stroke="#222" /></svg>
          </div>
          <div className="w-[81px] h-[25px] flex items-center justify-center gap-[3px] bg-[#f8f8f8] border border-[#cfcfcf]">
            <svg width="18" height="18" viewBox="0 0 18 18" className="block"><circle cx="9" cy="9" r="7" fill="#fff" stroke="#d8501a" strokeWidth="3" /><path d="M4 4l10 10" stroke="#d8501a" strokeWidth="3" /></svg>
            <span className="-mt-px text-[10.5px] text-[#333]">Cancel</span>
          </div>
        </div>
      </div>
    </div>
  );
}

export default function App() {
  return (
    <div className="relative w-[1280px] h-[720px] flex flex-col overflow-hidden bg-[#eeeff2] border-t border-[#999] font-['Noto_Sans',sans-serif] text-[12px]">
      {/* title bar */}
      <div className="h-[30px] shrink-0 flex items-center pl-[11px] pb-[3px]">
        <svg width="19" height="19" viewBox="0 0 20 20" className="block">
          <path d="M1 2h18v5l-5 3v9H6v-9L1 7z" fill="#3f8fb8" stroke="#1f5f80" />
          <path d="M7 8h6v10H7z" fill="#cfe6f2" />
          <path d="M10 8v10" stroke="#1f5f80" strokeWidth="2" />
        </svg>
        <span className="ml-[11px] text-[11.8px] text-[#999]">template1.stm - AStrutTie</span>
        <div className="ml-auto flex items-center pr-[14px] gap-[25px]">
          <div className="w-[9px] h-[3px] bg-[#222] mt-[3px]" />
          <div className="w-[9px] h-[9px] border border-[#222] border-t-[3px]" />
          <svg width="10" height="10" viewBox="0 0 10 10" className="block"><path d="M1 1l8 8M9 1L1 9" stroke="#222" strokeWidth="1.500" /></svg>
        </div>
      </div>

      {/* menu */}
      <div className="h-[22px] shrink-0 flex items-center pl-[11px]">
        <Grip />
        <div className="ml-[17px] -mt-px flex gap-4 text-[11.4px] text-[#444]">
          {['FILE', 'EDIT', 'VIEW', 'SELECT', 'DESIGN', 'DEFINE', 'ASSIGN', 'ANALYSIS', 'HELP'].map((m) => <span key={m}>{m}</span>)}
        </div>
      </div>

      {/* toolbars */}
      <div className="mt-[2px] h-[24px] shrink-0 flex items-center pl-[11px]">
        <Grip className="mr-[8px]" />
        {row1.map((t, i) => <Tool key={i} t={t} />)}
      </div>
      <div className="mt-[1px] h-[26px] shrink-0 flex items-center pl-[11px]">
        <Grip className="mr-[8px]" />
        {row2.map((t, i) => <Tool key={i} t={t} />)}
      </div>
      <div className="mt-[1px] h-[24px] shrink-0 flex items-center pl-[11px]">
        <Grip className="mr-[8px]" />
        <Combo label="LC01 : 1.00D" className="w-[151px]" />
        <Combo label="Truss" className="w-[119px]" />
        <Combo label="" className="w-[120px]" disabled />
        <span className="ml-[17px] w-[103px] text-[11.6px] text-[#444]">Modeling Mode</span>
        <div className="w-[100px] h-[22px] flex items-center justify-center border border-[#6aa4d0] text-[11.3px] text-[#444]">Area Iteration</div>
        <div className="w-[100px] h-[22px] flex items-center justify-center border border-l-0 border-[#6aa4d0] text-[11.3px] text-[#444]">design review</div>
        <div className="ml-[2px]"><Tool t="d" /></div>
      </div>

      <div className="flex-1 min-h-0 flex mt-[1px]">
        {/* work panel */}
        <div className="w-[200px] shrink-0 flex flex-col">
          <div className="h-[20px] shrink-0 flex items-center pl-[7px] pr-[13px]">
            <span className="text-[12px] text-[#555]">Work</span>
            <div className="flex-1 mx-[5px] border-t-4 border-dotted border-[#dcdde0]" />
            <svg width="10" height="11" viewBox="0 0 10 11" className="block"><path d="M2 1h6M3 1v5M7 1v5M1 6h8M5 6v5" stroke="#333" /></svg>
            <svg width="9" height="9" viewBox="0 0 9 9" className="block ml-[8px]"><path d="M1 1l7 7M8 1L1 8" stroke="#333" strokeWidth="1.300" /></svg>
          </div>
          <div className="flex-1 min-h-0 bg-white pl-[2px] overflow-hidden">
            {treeRows.map((r, i) => <TreeRow key={i} cells={r[0]} icon={r[1]} label={r[2]} />)}
          </div>
          <div className="h-[20px] shrink-0 flex text-[11.5px] text-[#666]">
            <div className="w-[39px] flex items-center pl-[6px] border-r border-[#d4d5d8] text-[#4a8ab8]">Work</div>
            <div className="w-[46px] flex items-center justify-center border-r border-[#d4d5d8]">Group</div>
            <div className="w-[47px] flex items-center justify-center border-r border-[#d4d5d8]">Report</div>
          </div>
        </div>
        <div className="w-[5px] shrink-0" />
        {/* canvas */}
        <div className="flex-1 min-w-0 bg-white border-l-2 border-t border-[#555] overflow-hidden border-r-2 border-r-[#c8d4e0]">
          <Drawing />
        </div>
      </div>

      {/* status bar */}
      <div className="h-[19px] shrink-0 flex items-center bg-[#0a76c6] text-[12px] text-[#bfdcf2]">
        <span className="ml-[3px]">Ready</span>
        <span className="ml-auto mr-[17px]">X-Z Plane</span>
        <div className="w-[79px] h-full flex items-center justify-center bg-[#fdb96e] border-t border-[#444] text-[#333]">Ortho On</div>
        <div className="ml-[2px] w-[82px] h-full flex items-center justify-between bg-white pl-[5px] text-[#333]">
          <span>KCI</span>
          <div className="w-[15px] h-full flex items-center justify-center bg-[#c6d6ea]">
            <div className="w-0 h-0 border-x-[4px] border-x-transparent border-t-[4px] border-t-[#222]" />
          </div>
        </div>
        <div className="ml-[1px] w-[61px] h-full flex items-center justify-between bg-white pl-[4px] text-[#333]">
          <span>KN.m</span>
          <div className="w-[15px] h-full flex items-center justify-center bg-[#c6d6ea]">
            <div className="w-0 h-0 border-x-[4px] border-x-transparent border-t-[4px] border-t-[#222]" />
          </div>
        </div>
        <div className="w-[20px]" />
      </div>

      <TieDialog />

      {/* video caption */}
      <div className="absolute left-[411px] top-[588px] w-[458px] h-[47px] flex items-center justify-center rounded-[9px] bg-[#7f7f7f] pl-[5px] pb-[6px] text-white text-[38px] tracking-[5.2px] font-light leading-none whitespace-nowrap font-['Noto_Sans_CJK_KR',sans-serif]">
        설계검토 및 철근량 변경
      </div>
    </div>
  );
}
